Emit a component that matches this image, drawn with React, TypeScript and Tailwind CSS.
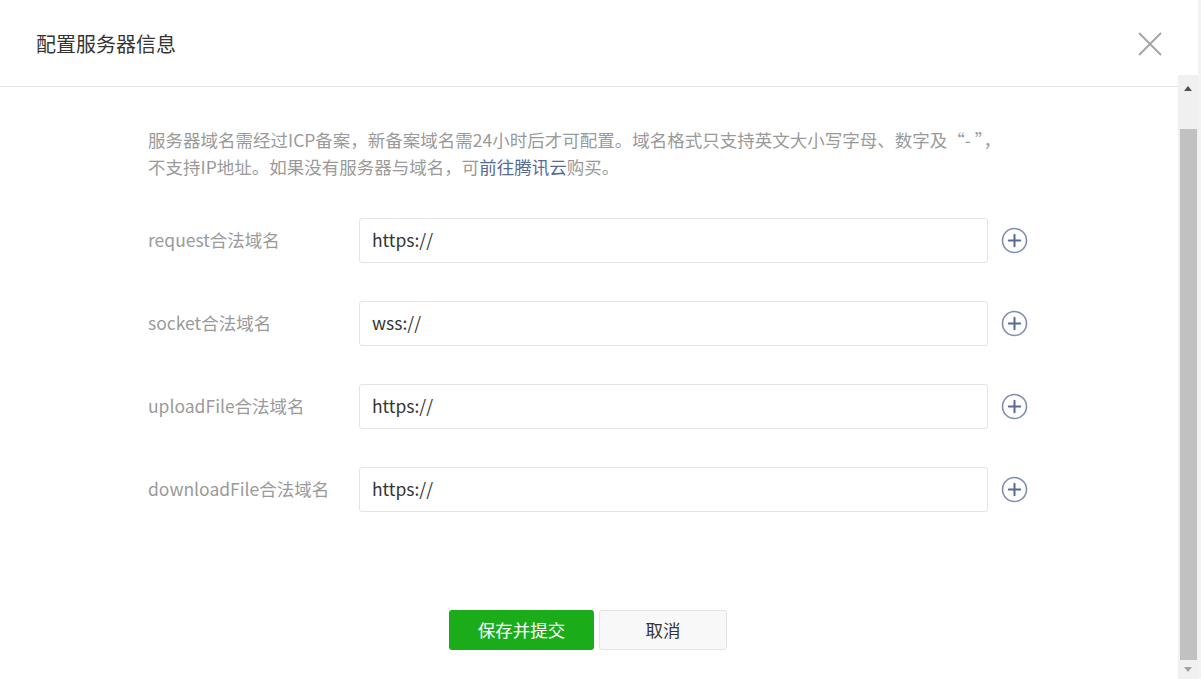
import React from "react";

const font = { fontFamily: '"Noto Sans CJK SC", "Noto Sans", sans-serif' };

function PlusIcon() {
  return (
    <svg width="27" height="27" viewBox="0 0 27 27" className="shrink-0">
      <circle cx="13.5" cy="13.5" r="12" fill="none" stroke="#7f8eae" strokeWidth="1.6" />
      <path d="M13.5 7.8v11.4M7.8 13.5h11.4" stroke="#566a94" strokeWidth="2" strokeLinecap="round" />
    </svg>
  );
}

const rows = [
  { label: "request合法域名", value: "https://" },
  { label: "socket合法域名", value: "wss://" },
  { label: "uploadFile合法域名", value: "https://" },
  { label: "downloadFile合法域名", value: "https://" },
];

export default function App() {
  return (
    <div className="flex h-[679px] w-[1201px] overflow-hidden bg-white" style={font}>
      <div className="flex w-[1178px] flex-col">
        <div className="flex h-[87px] shrink-0 items-center justify-between border-b border-[#e7e7e7] pl-[36px] pr-[16px]">
          <div className="pt-[1px] text-[20px] leading-[26px] text-[#353535]">配置服务器信息</div>
          <svg width="24" height="24" viewBox="0 0 24 24" className="mt-[1px]">
            <path d="M1 1l22 22M23 1L1 23" stroke="#a3a3a3" strokeWidth="1.8" />
          </svg>
        </div>
        <div className="flex flex-col pl-[148px] pt-[39px]">
          <div className="text-[17.5px] leading-[27px] text-[#9a9a9a]">
            <div>服务器域名需经过ICP备案，新备案域名需24小时后才可配置。域名格式只支持英文大小写字母、数字及“- ”，</div>
            <div>
              不支持IP地址。如果没有服务器与域名，可<span className="text-[#576b95]">前往腾讯云</span>购买。
            </div>
          </div>
          <div className="mt-[38px] flex flex-col gap-[38px]">
            {rows.map((r) => (
              <div key={r.label} className="flex items-center">
                <div className="w-[211px] shrink-0 text-[17.5px] text-[#9a9a9a]">{r.label}</div>
                <div className="flex h-[45px] w-[629px] items-center rounded-[3px] border border-[#e4e4e4] pl-[12px] text-[17.5px] text-[#353535]">
                  {r.value}
                </div>
                <div className="ml-[13px]">
                  <PlusIcon />
                </div>
              </div>
            ))}
          </div>
          <div className="mt-[98px] flex gap-[5px] pl-[301px]">
            <button className="flex h-[40px] w-[145px] items-center justify-center rounded-[3px] bg-[#1aad19] text-[17.5px] text-white">
              保存并提交
            </button>
            <button className="flex h-[40px] w-[128px] items-center justify-center rounded-[3px] border border-[#e3e3e6] bg-[#f8f8f9] text-[17.5px] text-[#353535]">
              取消
            </button>
          </div>
        </div>
      </div>
      <div className="flex w-[20px] flex-col pt-[75px]">
        <div className="flex flex-1 flex-col items-center bg-[#f0f0f0]">
          <div className="flex h-[27px] items-center justify-center">
            <div className="h-0 w-0 border-x-[4.5px] border-b-[5px] border-x-transparent border-b-[#505050]" />
          </div>
          <div className="mt-[27px] w-[17px] flex-1 bg-[#c1c1c1]" />
          <div className="flex h-[19px] items-center justify-center">
            <div className="h-0 w-0 border-x-[4.5px] border-t-[5px] border-x-transparent border-t-[#a3a3a3]" />
          </div>
        </div>
      </div>
      <div className="w-[3px] bg-[#f3f3f5]" />
    </div>
  );
}
